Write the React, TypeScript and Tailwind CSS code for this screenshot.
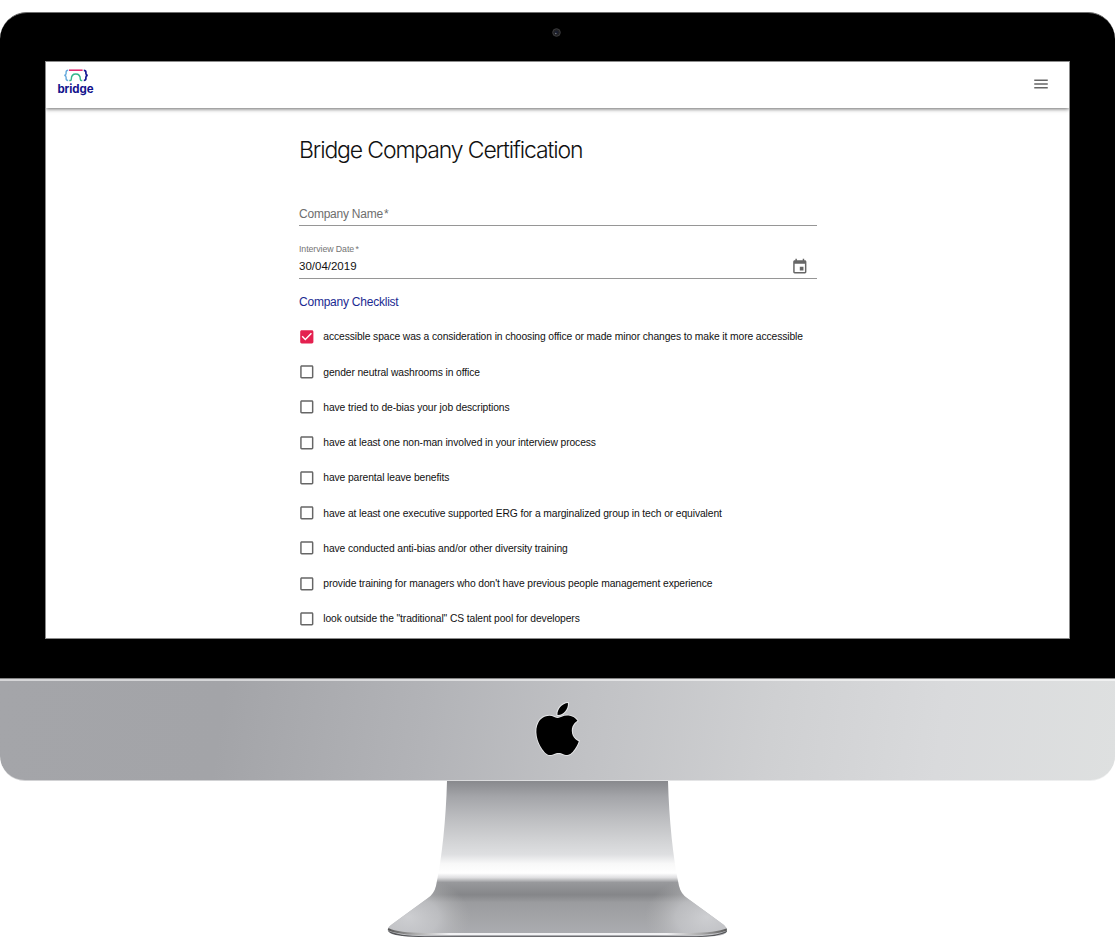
import React from "react";

const items: { label: string; checked?: boolean }[] = [
  { label: "accessible space was a consideration in choosing office or made minor changes to make it more accessible", checked: true },
  { label: "gender neutral washrooms in office" },
  { label: "have tried to de-bias your job descriptions" },
  { label: "have at least one non-man involved in your interview process" },
  { label: "have parental leave benefits" },
  { label: "have at least one executive supported ERG for a marginalized group in tech or equivalent" },
  { label: "have conducted anti-bias and/or other diversity training" },
  { label: "provide training for managers who don't have previous people management experience" },
  { label: 'look outside the "traditional" CS talent pool for developers' },
];

function Checkbox({ checked }: { checked?: boolean }) {
  return (
    <svg viewBox="0 0 24 24" className={checked ? "size-[17.6px] shrink-0 text-[#e4204f]" : "size-[17.6px] shrink-0 text-[#666]"} fill="currentColor">
      {checked ? (
        <path d="M19 3H5c-1.11 0-2 .9-2 2v14c0 1.1.89 2 2 2h14c1.11 0 2-.9 2-2V5c0-1.1-.89-2-2-2zm-9 14l-5-5 1.41-1.41L10 14.17l7.59-7.59L19 8l-9 9z" />
      ) : (
        <path d="M19 5v14H5V5h14m0-2H5c-1.1 0-2 .9-2 2v14c0 1.1.9 2 2 2h14c1.1 0 2-.9 2-2V5c0-1.1-.9-2-2-2z" />
      )}
    </svg>
  );
}

function Logo() {
  return (
    <div className="flex w-[37px] flex-col items-center">
      <svg width="26" height="13" viewBox="0 0 26 13" fill="none" strokeWidth="1.4">
        <path d="M5.2 1.3C3.3 1.3 3.1 2 3.1 3.2v1.300c0 1-.4 1.700-1.800 1.900 1.400.2 1.800.9 1.800 1.900v1.300c0 1.200.2 1.900 2.100 1.900" stroke="#63a8dc" />
        <path d="M6 1.200h13.600" stroke="#e0206a" strokeWidth="1.500" />
        <path d="M6.300 11.500h1c.9 0 1-.5 1-1.300 0-3 1.300-5.200 4.500-5.200s4.500 2.200 4.500 5.200c0 .8.1 1.300 1 1.300h1" stroke="#35b58c" />
        <path d="M20.800 1.300c1.900 0 2.100.7 2.100 1.900v1.300c0 1 .4 1.700 1.800 1.900-1.400.2-1.800.9-1.800 1.900v1.300c0 1.200-.2 1.900-2.100 1.900" stroke="#151593" strokeWidth="1.700" />
      </svg>
      <span className="mt-[0.500px] font-['Inter'] text-[11.500px] leading-[14px] font-bold tracking-[-0.050px] text-[#12128c]">bridge</span>
    </div>
  );
}

function Screen() {
  return (
    <div className="flex h-[577.500px] w-[1025px] flex-col overflow-hidden border border-[#8b8b8b] bg-white">
      <header className="z-10 flex h-[45.500px] shrink-0 items-center justify-between bg-white pr-[19px] pl-[11px] shadow-[0_1px_4px_rgba(0,0,0,0.6)]">
        <div className="-mt-[4.500px]"><Logo /></div>
        <svg viewBox="0 0 24 24" className="-mt-[1.500px] size-[18px] text-[#666]" fill="currentColor">
          <path d="M3 18h18v-2H3v2zm0-5h18v-2H3v2zm0-7v2h18V6H3z" />
        </svg>
      </header>
      <main className="ml-[253px] flex w-[518px] flex-col">
        <h1 className="mt-[26.500px] h-[32px] font-['Inter'] text-[23px] leading-[32px] font-light tracking-[-1.140px] whitespace-nowrap text-[#111]">Bridge Company Certification</h1>
        <div className="mt-[37px] flex h-[23px] w-[517.500px] border-b border-[#969696] pt-[3px] text-[12px] leading-[16px] tracking-[-0.230px] text-[#6e6e6e]">
          <span>Company Name<span className="ml-[1px]">*</span></span>
        </div>
        <div className="mt-[17px] flex h-[36px] w-[517.500px] border-b border-[#969696]">
          <div className="flex flex-1 flex-col">
            <span className="h-[13px] text-[8.800px] leading-[13px] tracking-[-0.080px] text-[#757575]">Interview Date<span className="ml-[1.500px]">*</span></span>
            <span className="mt-[2px] text-[11.500px] leading-[16px] text-[#111]">30/04/2019</span>
          </div>
          <svg viewBox="0 0 24 24" className="mt-[15px] mr-[8px] size-[17.600px] text-[#666]" fill="currentColor">
            <path d="M17 12h-5v5h5v-5zM16 1v2H8V1H6v2H5c-1.110 0-1.990.9-1.990 2L3 19c0 1.100.89 2 2 2h14c1.100 0 2-.9 2-2V5c0-1.100-.9-2-2-2h-1V1h-2zm3 18H5V8h14v11z" />
          </svg>
        </div>
        <h2 className="mt-[15px] h-[16px] text-[12px] leading-[16px] tracking-[-0.230px] text-[#1b2a92]">Company Checklist</h2>
        <ul className="-ml-[1.300px] mt-[9.100px]">
          {items.map((item) => (
            <li key={item.label} className="flex h-[35.250px] items-center gap-[8px]">
              <Checkbox checked={item.checked} />
              <span className="pt-[1.500px] text-[10.300px] leading-[16px] tracking-[-0.103px] whitespace-nowrap text-[#111]">{item.label}</span>
            </li>
          ))}
        </ul>
      </main>
    </div>
  );
}

function Stand() {
  const outline = "M447 0H668C669 38 673 77 679 105Q681 113 687 117L724 144Q731 151 722 154Q710 156 690 156H425Q400 156 392 153Q384 149 391 144L428 117Q434 113 436 105C442 77 446 38 447 0Z";
  return (
    <svg width="1115" height="160" viewBox="0 0 1115 160" className="block">
      <defs>
        <linearGradient id="metal" gradientUnits="userSpaceOnUse" x1="0" y1="0" x2="0" y2="156">
          <stop offset="0" stopColor="#88898d" />
          <stop offset=".1" stopColor="#a4a5a9" />
          <stop offset=".23" stopColor="#bbbcbf" />
          <stop offset=".37" stopColor="#d0d1d3" />
          <stop offset=".47" stopColor="#dedfe1" />
          <stop offset=".53" stopColor="#f8f8f8" />
          <stop offset=".59" stopColor="#fff" />
          <stop offset=".62" stopColor="#dedee0" />
          <stop offset=".65" stopColor="#98999c" />
          <stop offset=".73" stopColor="#858689" />
          <stop offset=".78" stopColor="#9b9c9f" />
          <stop offset="1" stopColor="#adaeb2" />
        </linearGradient>
        <radialGradient id="glow">
          <stop offset="0" stopColor="#dcdde0" stopOpacity=".75" />
          <stop offset=".5" stopColor="#d2d3d6" stopOpacity=".55" />
          <stop offset="1" stopColor="#bbb" stopOpacity="0" />
        </radialGradient>
        <linearGradient id="edge">
          <stop offset="0" stopColor="#555" />
          <stop offset=".08" stopColor="#aaa" />
          <stop offset=".18" stopColor="#f2f2f4" />
          <stop offset=".82" stopColor="#f2f2f4" />
          <stop offset=".92" stopColor="#aaa" />
          <stop offset="1" stopColor="#555" />
        </linearGradient>
        <clipPath id="standShape"><path d={outline} /></clipPath>
      </defs>
      <path d={outline} fill="url(#metal)" />
      <g clipPath="url(#standShape)">
        <ellipse cx="408" cy="136" rx="62" ry="42" fill="url(#glow)" />
        <ellipse cx="707" cy="136" rx="62" ry="42" fill="url(#glow)" />
        <path d="M388 148Q398 153 425 153H690Q717 153 728 148" fill="none" stroke="url(#edge)" strokeWidth="2" />
        <path d="M387 150Q398 156 425 156H690Q717 156 728 150" fill="none" stroke="#555659" strokeWidth="1.500" />
      </g>
    </svg>
  );
}

export default function App() {
  return (
    <div className="flex h-[941px] w-[1115px] flex-col overflow-hidden bg-white pt-[12px] font-['Liberation_Sans',sans-serif]">
      <div className="flex h-[666px] shrink-0 flex-col rounded-t-[27px] border-t border-[#707070] bg-black pl-[45px]">
        <div className="flex h-[48px] shrink-0 pt-[15px] pl-[507px]">
          <svg width="9" height="9" viewBox="0 0 9 9">
            <circle cx="4.500" cy="4.500" r="3.800" fill="#222224" stroke="#3b3b3d" />
            <circle cx="4.500" cy="4.500" r="1.800" fill="#181c2c" />
            <circle cx="3.800" cy="5.500" r=".8" fill="#73777f" />
          </svg>
        </div>
        <Screen />
      </div>
      <div className="flex h-[103px] shrink-0 justify-center rounded-b-[25px] border-b border-[#ffffff80] bg-[linear-gradient(98deg,#a4a5a9_0%,#a3a4a8_20%,#b2b3b7_38%,#c1c2c5_53%,#cfd0d2_69%,#d9dadc_84%,#dee0e0_100%)] shadow-[inset_0_1px_0_#858585,inset_0_3px_0_rgba(255,255,255,0.55)]">
        <svg width="46" height="56" viewBox="1.600 -.92 21.200 25.800" className="mt-[23px] overflow-visible" fill="#000" stroke="#e5e6e8" strokeWidth=".9" paintOrder="stroke">
          <path d="M12.152 6.896c-.948 0-2.415-1.078-3.960-1.040-2.040.027-3.910 1.183-4.961 3.014-2.117 3.675-.546 9.103 1.519 12.090 1.013 1.454 2.208 3.090 3.792 3.039 1.520-.065 2.090-.987 3.935-.987 1.831 0 2.350.987 3.960.948 1.637-.026 2.676-1.480 3.676-2.948 1.156-1.688 1.636-3.325 1.662-3.415-.039-.013-3.182-1.221-3.220-4.857-.026-3.040 2.480-4.494 2.597-4.559-1.429-2.090-3.623-2.324-4.390-2.376-2-.156-3.675 1.090-4.610 1.090z" />
          <path d="M15.530 3.830c.843-1.012 1.400-2.427 1.245-3.830-1.207.052-2.662.805-3.532 1.818-.78.896-1.454 2.338-1.273 3.714 1.338.104 2.715-.688 3.559-1.701z" />
        </svg>
      </div>
      <Stand />
    </div>
  );
}
